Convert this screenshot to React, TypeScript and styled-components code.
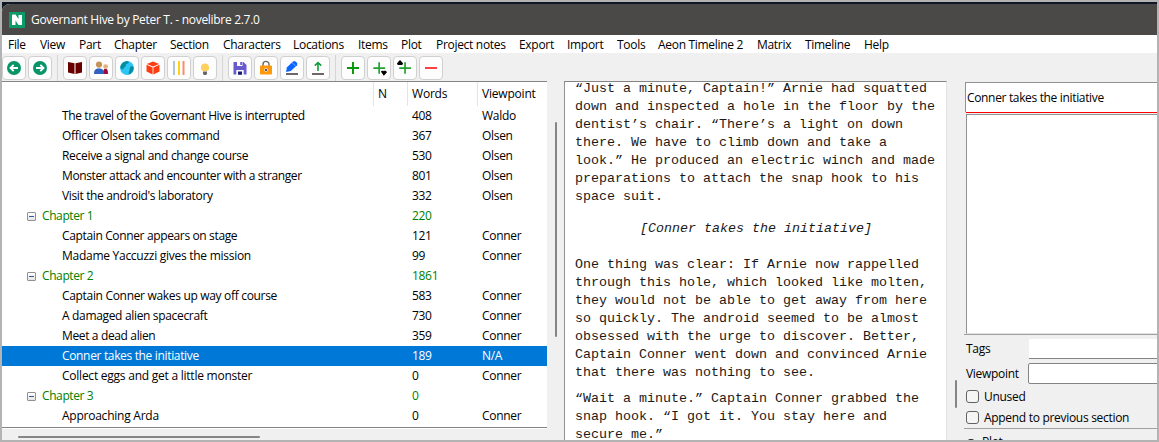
import React from "react";
import styled, { createGlobalStyle, css } from "styled-components";

const ui = `"Open Sans", "Noto Sans", sans-serif`;

const Global = createGlobalStyle`
  * { box-sizing: border-box; }
  body { margin: 0; background: #b3b3b3; overflow: hidden; }
`;

const Frame = styled.div`
  width: 1159px;
  height: 442px;
  padding: 2px;
  background: #b3b3b3;
  font-family: ${ui};
  font-size: 12px;
  letter-spacing: -0.3px;
  color: #000;
`;

const Desktop = styled.div`
  height: 438px;
  padding-top: 2px;
  background: #0f1726;
  overflow: hidden;
`;

const Window = styled.div`
  display: flex;
  flex-direction: column;
  width: 1163px;
  height: 436px;
  border-radius: 8px 0 0 0;
  background: #f0f0f0;
  overflow: hidden;
`;

const TitleBar = styled.header`
  display: flex;
  align-items: center;
  gap: 6px;
  height: 31px;
  flex: none;
  padding-left: 7px;
  background: #4b4947;
  color: #fff;
`;

const MenuBar = styled.nav`
  display: flex;
  height: 18px;
  flex: none;
  padding-left: 6px;
  background: #fff;
  line-height: 20px;
`;

const MenuItem = styled.span<{ $w: number }>`
  width: ${(p) => p.$w}px;
  flex: none;
  white-space: nowrap;
`;

const Toolbar = styled.div`
  display: flex;
  align-items: center;
  gap: 2px;
  height: 28px;
  flex: none;
  padding-top: 2px;
`;

const Separator = styled.i`
  width: 1px;
  height: 26px;
  margin: 0 3px 0 3px;
  background: #d6d6d6;
`;

const ToolButton = styled.button`
  display: flex;
  align-items: center;
  justify-content: center;
  width: 24px;
  height: 24px;
  padding: 0;
  border: 1px solid #d0d0d0;
  border-radius: 4px;
  background: #fdfdfd;
`;

const Workspace = styled.main`
  display: flex;
  height: 359px;
`;

const TreePane = styled.section`
  width: 545px;
  flex: none;
`;

const Tree = styled.div`
  height: 347px;
  border-top: 1px solid #848484;
  border-bottom: 1px solid #848484;
  background: #fff;
`;

const HorizontalTrack = styled.div`
  padding: 7px 0 0 16px;
  border-top: 1px solid #fff;
`;

const HorizontalThumb = styled.div`
  width: 242px;
  height: 2px;
  border-radius: 1px;
  background: #858585;
`;

const HeaderRow = styled.div`
  display: flex;
  height: 24px;
`;

const HeaderCell = styled.div<{ $w: number }>`
  width: ${(p) => p.$w}px;
  padding-left: 4px;
  border-left: 1px solid #e4e4e4;
  line-height: 24px;
  letter-spacing: -0.2px;
  &:first-child { border: 0; }
`;

const Row = styled.div<{ $chapter?: boolean; $selected?: boolean }>`
  display: flex;
  height: 20px;
  line-height: 20px;
  white-space: nowrap;
  ${(p) => p.$chapter && css`color: #008000;`}
  ${(p) => p.$selected && css`background: #0078d7; color: #fff;`}
`;

const NameCell = styled.div<{ $chapter?: boolean; $ls?: number }>`
  display: flex;
  align-items: center;
  gap: 6px;
  width: 410px;
  height: 20px;
  padding-left: ${(p) => (p.$chapter ? 25 : 60)}px;
  letter-spacing: ${(p) => p.$ls ?? -0.3}px;
`;

const WordsCell = styled.div`
  width: 70px;
`;

const ViewpointCell = styled.div``;

const Expander = styled.i`
  display: flex;
  align-items: center;
  justify-content: center;
  width: 9px;
  height: 9px;
  border: 1px solid #919191;
  border-radius: 1px;
  background: linear-gradient(#fff, #e4e4e4);
  &::before { content: ""; width: 5px; height: 1px; background: #3656a6; }
`;

const VerticalTrack = styled.div<{ $w: number; $top: number; $left: number }>`
  width: ${(p) => p.$w}px;
  flex: none;
  padding: ${(p) => p.$top}px 0 0 ${(p) => p.$left}px;
`;

const VerticalThumb = styled.div<{ $h: number }>`
  width: 2px;
  height: ${(p) => p.$h}px;
  border-radius: 1px;
  background: #858585;
`;

const TextPane = styled.article`
  width: 383px;
  flex: none;
  overflow: hidden;
  padding: 0 0 0 10px;
  border-left: 1px solid #919191;
  border-top: 1px solid #848484;
  border-right: 1px solid #e3e3e3;
  background: #fff;
  color: #1a1a1a;
  font: 13.333px/18px "Liberation Mono", monospace;
  letter-spacing: 0;
  white-space: pre;
`;

const Paragraph = styled.p<{ $gap: number }>`
  margin: ${(p) => p.$gap}px 0 0;
`;

const SectionTitle = styled.p`
  margin: 14px 0 18px;
  padding-left: 65px;
  font-style: italic;
`;

const Properties = styled.aside`
  display: flex;
  flex-direction: column;
  width: 196px;
  flex: none;
  padding-top: 1px;
`;

const TitleEntry = styled.div`
  height: 30px;
  flex: none;
  margin-left: 1px;
  padding-left: 1px;
  border-top: 1px solid #919191;
  border-left: 1px solid #919191;
  background: #fff;
  line-height: 30px;
  letter-spacing: -0.34px;
`;

const ColorBar = styled.div`
  height: 2px;
  flex: none;
  margin-left: 2px;
  border-top: 1px solid #ff0000;
  background: #f0f0f0;
`;

const Notes = styled.div`
  height: 220px;
  flex: none;
  margin-left: 2px;
  border: 1px solid #919191;
  border-bottom-color: #e3e3e3;
  background: #fff;
`;

const Rule = styled.div<{ $mt?: number }>`
  height: 1px;
  flex: none;
  margin-top: ${(p) => p.$mt ?? 0}px;
  background: #a0a0a0;
`;

const Field = styled.label<{ $h: number }>`
  display: flex;
  align-items: center;
  height: ${(p) => p.$h}px;
  flex: none;
  padding-left: 2px;
`;

const FieldName = styled.span<{ $w: number }>`
  width: ${(p) => p.$w}px;
`;

const TagsInput = styled.div`
  flex: 1;
  height: 20px;
  border-bottom: 1px solid #848484;
  background: #fff;
`;

const ViewpointInput = styled.div`
  flex: 1;
  height: 21px;
  border: 1px solid #848484;
  border-radius: 2px;
  background: #fff;
`;

const CheckBox = styled.i`
  width: 13px;
  height: 13px;
  margin-right: 5px;
  border: 1px solid #626262;
  border-radius: 3px;
  background: #f5f5f5;
`;

const GroupTitle = styled.div`
  display: flex;
  gap: 8px;
  padding: 4px 0 0 4px;
  line-height: 17px;
`;

const Bullet = styled.i`
  width: 6px;
  height: 2px;
  margin-top: 6px;
  border-radius: 2px 2px 0 0;
  background: #333;
`;

const Icon = ({ children }: { children: React.ReactNode }) => (
  <svg width="22" height="22" viewBox="0 0 22 22">{children}</svg>
);

const icons: Record<string, React.ReactNode> = {
  back: <><circle cx="11" cy="11" r="7" fill="#079467" /><path d="M15 11H8M10.7 7.8L7.5 11L10.7 14.2" fill="none" stroke="#fff" strokeWidth="1.9" /></>,
  forward: <><circle cx="11" cy="11" r="7" fill="#079467" /><path d="M7 11H14M11.3 7.8L14.5 11L11.3 14.2" fill="none" stroke="#fff" strokeWidth="1.9" /></>,
  book: <path d="M4 5L10.5 6.3V17L4 15.6ZM18 5L11.5 6.3V17L18 15.6Z" fill="#690000" />,
  people: <>
    <path d="M13 17C13 13 14 11.7 15.5 11.7C17.5 11.7 18 13.5 18 17Z" fill="#9b0c3c" />
    <circle cx="15.6" cy="9.6" r="2.4" fill="#e5b078" />
    <circle cx="9" cy="7.6" r="3.1" fill="#c89257" />
    <path d="M4 17C4 13 5.5 11.6 9 11.6C12.5 11.6 14 13 14 17Z" fill="#2e63c5" />
  </>,
  globe: <>
    <circle cx="11" cy="11" r="6.9" fill="#2cc5f8" />
    <path d="M4.3 10.2C5 6 9 3.7 12.4 4.4C13.5 6 11.5 6.5 10 7.3C10.5 9.5 8 10 7.4 12C6 13 4.6 12 4.3 10.2ZM15 9.5C16.5 8.6 17.5 9.5 17.7 11C17.5 14 15.7 16.8 13 17.4C11.8 15.8 13.7 14.5 13.5 13C13.3 11.4 14 10.2 15 9.5Z" fill="#068c9b" />
  </>,
  box: <>
    <path d="M11 4.4L17.2 7L11 9.6L4.8 7Z" fill="#ff3d12" />
    <path d="M4.5 7.8L10.6 10.4V17.4L4.5 14.5ZM17.5 7.8L11.4 10.4V17.4L17.5 14.5Z" fill="#ff3d12" />
  </>,
  lines: <><path d="M6 4V18" stroke="#b0c4de" strokeWidth="2" /><path d="M11 4V18" stroke="#ffd11a" strokeWidth="2" /><path d="M15.5 4V18" stroke="#fa8c68" strokeWidth="2" /></>,
  bulb: <><path d="M11 6.6A4 4 0 0 1 13.2 14H8.8A4 4 0 0 1 11 6.6Z" fill="#ffd15c" /><path d="M9 14.6H13V17L12 18H10L9 17Z" fill="#666" /></>,
  save: <><path d="M4.5 5H14.5L17.5 8V17.5H4.5Z" fill="#6a5acd" /><path d="M8 4.5H13.5V9H8Z" fill="#fdfdfd" /><path d="M11.2 5H13V8H11.2Z" fill="#6a5acd" /><path d="M7.3 13H14.7V18H7.3Z" fill="#fdfdfd" /><path d="M9 14.4H13V17.7H9Z" fill="#191970" /></>,
  lock: <><path d="M8 10V7.4A3 3 0 0 1 14 7.4V10" fill="none" stroke="#6b6b62" strokeWidth="1.4" /><rect x="5" y="8.5" width="12" height="9" rx="1" fill="#ff980c" /><circle cx="11" cy="13" r="1.5" fill="#222" stroke="#fff" strokeWidth=".8" /></>,
  pencil: <><path d="M5 15L6 10.3L12 4.6C13.7 3.2 17.3 5.5 16 8.2L9.8 14Z" fill="#0a66ff" /><path d="M11 5.8L14.8 9.1" stroke="#fff" strokeWidth=".4" /><path d="M5 17H17" stroke="#403030" strokeWidth="1.7" /></>,
  upload: <><path d="M11 14V6M7.8 8.6L11 5.5L14.2 8.6" fill="none" stroke="#119b3c" strokeWidth="1.6" /><path d="M5 17H17" stroke="#403030" strokeWidth="1.7" /></>,
  add: <path d="M10 5h2v5h5v2h-5v5h-2v-5h-5v-2h5z" fill="#0a9a0a" />,
  addBelow: <><path d="M10.3 5.3H12V10.2H17.2V11.9H12V16.7H10.3V11.9H5.3V10.2H10.3Z" fill="#22a32e" /><path d="M13 14.7C13.2 13.5 15.5 13.5 15.8 14.2C16.5 13.3 19 13.7 18.8 15.5L15.8 18.7Z" fill="#000" /></>,
  addAbove: <><path d="M10.2 5.3H11.9V10.2H16.9V11.9H11.9V16.7H10.2V11.9H5.2V10.2H10.2Z" fill="#22a32e" /><path d="M3 6.3L6 3L9 6.3L8.3 8H3.7Z" fill="#000" /></>,
  remove: <path d="M5 10h12v2h-12z" fill="#ff4040" />,
};

const toolGroups = [
  ["back", "forward"],
  ["book", "people", "globe", "box", "lines", "bulb"],
  ["save", "lock", "pencil", "upload"],
  ["add", "addBelow", "addAbove", "remove"],
];

const menu: [string, number][] = [
  ["File", 32], ["View", 39], ["Part", 35], ["Chapter", 56], ["Section", 53],
  ["Characters", 70], ["Locations", 65], ["Items", 43], ["Plot", 35],
  ["Project notes", 83], ["Export", 48], ["Import", 50], ["Tools", 41],
  ["Aeon Timeline 2", 99], ["Matrix", 48], ["Timeline", 59], ["Help", 40],
];

interface Section {
  name: string;
  words: string;
  viewpoint?: string;
  chapter?: boolean;
  selected?: boolean;
  ls?: number;
}

const sections: Section[] = [
  { name: "The travel of the Governant Hive is interrupted", words: "408", viewpoint: "Waldo", ls: -0.38 },
  { name: "Officer Olsen takes command", words: "367", viewpoint: "Olsen" },
  { name: "Receive a signal and change course", words: "530", viewpoint: "Olsen" },
  { name: "Monster attack and encounter with a stranger", words: "801", viewpoint: "Olsen", ls: -0.38 },
  { name: "Visit the android's laboratory", words: "332", viewpoint: "Olsen", ls: -0.36 },
  { name: "Chapter 1", words: "220", chapter: true, ls: -0.4 },
  { name: "Captain Conner appears on stage", words: "121", viewpoint: "Conner", ls: -0.36 },
  { name: "Madame Yaccuzzi gives the mission", words: "99", viewpoint: "Conner", ls: -0.27 },
  { name: "Chapter 2", words: "1861", chapter: true, ls: -0.4 },
  { name: "Captain Conner wakes up way off course", words: "583", viewpoint: "Conner", ls: -0.32 },
  { name: "A damaged alien spacecraft", words: "730", viewpoint: "Conner", ls: -0.33 },
  { name: "Meet a dead alien", words: "359", viewpoint: "Conner", ls: -0.36 },
  { name: "Conner takes the initiative", words: "189", viewpoint: "N/A", selected: true, ls: -0.34 },
  { name: "Collect eggs and get a little monster", words: "0", viewpoint: "Conner", ls: -0.24 },
  { name: "Chapter 3", words: "0", chapter: true, ls: -0.4 },
  { name: "Approaching Arda", words: "0", viewpoint: "Conner", ls: -0.24 },
];

export default function App() {
  return (
    <Frame>
      <Global />
      <Desktop>
        <Window>
          <TitleBar>
            <svg width="16" height="16" viewBox="0 0 16 16">
              <path d="M0 0H16V16H0Z" fill="#0a9b6b" />
              <path d="M3 13V3.6Q3 2.6 4 2.6H6.5L9.5 7V3H13V12.4Q13 13 12 13H9.5L6.5 8.6V13Z" fill="#fff" />
            </svg>
            <span>Governant Hive by Peter T. - novelibre 2.7.0</span>
          </TitleBar>
          <MenuBar>
            {menu.map(([name, w]) => <MenuItem key={name} $w={w}>{name}</MenuItem>)}
          </MenuBar>
          <Toolbar>
            {toolGroups.map((group, i) => (
              <React.Fragment key={i}>
                {i > 0 && <Separator />}
                {group.map((id) => <ToolButton key={id}><Icon>{icons[id]}</Icon></ToolButton>)}
              </React.Fragment>
            ))}
          </Toolbar>
          <Workspace>
            <TreePane>
              <Tree>
                <HeaderRow>
                  <HeaderCell $w={371} />
                  <HeaderCell $w={34}>N</HeaderCell>
                  <HeaderCell $w={70}>Words</HeaderCell>
                  <HeaderCell $w={70}>Viewpoint</HeaderCell>
                </HeaderRow>
                {sections.map((s) => (
                  <Row key={s.name} $chapter={s.chapter} $selected={s.selected}>
                    <NameCell $chapter={s.chapter} $ls={s.ls}>
                      {s.chapter && <Expander />}
                      <span>{s.name}</span>
                    </NameCell>
                    <WordsCell>{s.words}</WordsCell>
                    <ViewpointCell>{s.viewpoint}</ViewpointCell>
                  </Row>
                ))}
              </Tree>
              <HorizontalTrack><HorizontalThumb /></HorizontalTrack>
            </TreePane>
            <VerticalTrack $w={17} $top={41} $left={8}><VerticalThumb $h={215} /></VerticalTrack>
            <TextPane>
              <Paragraph $gap={-2}>{`“Just a minute, Captain!” Arnie had squatted
down and inspected a hole in the floor by the
dentist’s chair. “There’s a light on down
there. We have to climb down and take a
look.” He produced an electric winch and made
preparations to attach the snap hook to his
space suit.`}</Paragraph>
              <SectionTitle>[Conner takes the initiative]</SectionTitle>
              <Paragraph $gap={0}>{`One thing was clear: If Arnie now rappelled
through this hole, which looked like molten,
they would not be able to get away from here
so quickly. The android seemed to be almost
obsessed with the urge to discover. Better,
Captain Conner went down and convinced Arnie
that there was nothing to see.`}</Paragraph>
              <Paragraph $gap={8}>{`“Wait a minute.” Captain Conner grabbed the
snap hook. “I got it. You stay here and
secure me.”`}</Paragraph>
            </TextPane>
            <VerticalTrack $w={17} $top={299} $left={8}><VerticalThumb $h={28} /></VerticalTrack>
            <Properties>
              <TitleEntry>Conner takes the initiative</TitleEntry>
              <ColorBar />
              <Notes />
              <Rule />
              <Field $h={27}><FieldName $w={63}>Tags</FieldName><TagsInput /></Field>
              <Field $h={23}><FieldName $w={62}>Viewpoint</FieldName><ViewpointInput /></Field>
              <Field $h={23}><CheckBox />Unused</Field>
              <Field $h={19}><CheckBox />Append to previous section</Field>
              <Rule $mt={1} />
              <GroupTitle><Bullet />Plot</GroupTitle>
            </Properties>
          </Workspace>
        </Window>
      </Desktop>
    </Frame>
  );
}
